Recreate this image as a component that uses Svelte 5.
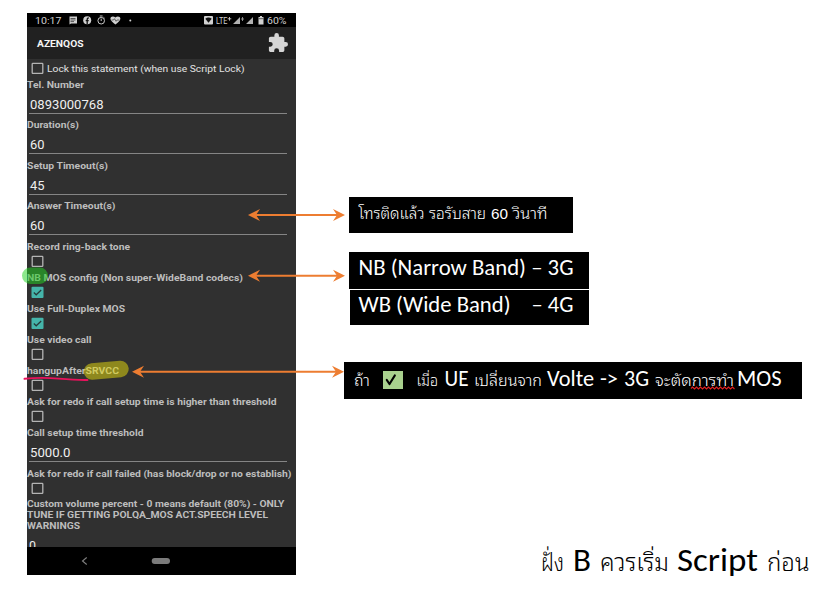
<script>
  const items = [
    { kind: 'field', label: ['Tel. Number', 57], value: ['0893000768', 73.5] },
    { kind: 'field', label: ['Duration(s)', 52], value: ['60', 14.5] },
    { kind: 'field', label: ['Setup Timeout(s)', 81], value: ['45', 14.5] },
    { kind: 'field', label: ['Answer Timeout(s)', 88.5], value: ['60', 14.5] },
    { kind: 'check', label: ['Record ring-back tone', 103] },
    { kind: 'check', label: ['NB MOS config (Non super-WideBand codecs)', 216], on: true },
    { kind: 'check', label: ['Use Full-Duplex MOS', 98], on: true },
    { kind: 'check', label: ['Use video call', 64.5] },
    { kind: 'check', label: ['hangupAfterSRVCC', 92] },
    { kind: 'check', label: ['Ask for redo if call setup time is higher than threshold', 249.5] },
    { kind: 'field', label: ['Call setup time threshold', 116.5], value: ['5000.0', 40.5] },
    { kind: 'check', label: ['Ask for redo if call failed (has block/drop or no establish)', 264.5] },
  ];
  const volume = [
    ['Custom volume percent - 0 means default (80%) - ONLY', 257.5],
    ['TUNE IF GETTING POLQA_MOS ACT.SPEECH LEVEL', 241],
    ['WARNINGS', 53],
  ];
  // Each run: text, x, width, class
  const answerNote = [
    ['โทรติดแล้ว', 9.5, 66, 'th'], ['รอรับสาย', 80, 57, 'th'], ['60', 142, 17, 'num'], ['วินาที', 163.5, 35, 'th'],
  ];
  const nbNote = [['NB (Narrow Band) – 3G', 9.5, 215, 'la']];
  const wbNote = [['WB (Wide Band)', 8.5, 152, 'la'], ['– 4G', 181.5, 42, 'la']];
  const srvccNote = [
    ['ถ้า', 10, 16, 'th'], ['เมื่อ', 72.5, 21.5, 'th'], ['UE', 100.5, 24, 'la'],
    ['เปลี่ยนจาก', 130, 68, 'th'], ['Volte', 203, 47, 'la'], ['->', 256, 18, 'la'], ['3G', 280, 25, 'la'],
    ['จะตัดการทำ', 311, 79, 'th'], ['MOS', 393, 44.5, 'la'],
  ];
  const footer = [
    ['ฝั่ง', 1, 23, 'th'], ['B', 33, 18, 'la'], ['ควรเริ่ม', 60, 69, 'th'], ['Script', 137, 81, 'la'], ['ก่อน', 227, 42.5, 'th'],
  ];
  const arrows = [[248, 345, 215], [248, 345, 275.7], [132, 344, 371.8]];
</script>

{#snippet line(text, width, height, base, cls)}
  <svg class="line {cls}" width={width + 1} {height}>
    <text x="0" y={base} textLength={width} lengthAdjust="spacingAndGlyphs">{text}</text>
  </svg>
{/snippet}

{#snippet runs(list, base)}
  {#each list as [text, x, w, cls]}
    <text class={cls} {x} y={base} textLength={w} lengthAdjust="spacingAndGlyphs">{text}</text>
  {/each}
{/snippet}

{#snippet box(on)}
  <svg class="box" width="13" height="13" viewBox="0 0 13 13">
    {#if on}
      <rect x=".5" y=".8" width="12" height="11.2" rx="1" fill="#45b5aa" />
      <path d="M2.800 6.500 5.200 8.800 10.200 4" fill="none" stroke="#263a39" stroke-width="1.200" />
    {:else}
      <rect x="1.200" y="1.400" width="10.600" height="10" rx=".7" fill="none" stroke="#b4b4b4" stroke-width="1.300" />
    {/if}
  </svg>
{/snippet}

<div class="slide">
  <div class="phone">
    <div class="status">
      <svg width="269" height="14" viewBox="27 13 269 14">
        <g fill="#d0d0d0">
          <text x="35" y="23.700" font-size="9.800" textLength="26.500" lengthAdjust="spacingAndGlyphs">10:17</text>
          <path d="M69.500 16.500h7.500v7h-6l-1.500 1z" />
          <path d="M70.500 18.500h5M70.500 20h5M70.500 21.600h3.500" stroke="#222" stroke-width=".7" />
          <circle cx="87.200" cy="20.200" r="4" />
          <path d="M87.200 24.300v-5q0-1.400 1.600-1.300M85.700 20.700h3" stroke="#111" stroke-width="1.300" fill="none" />
          <circle cx="101.200" cy="20.700" r="3.300" fill="none" stroke="#c8c8c8" stroke-width="1" />
          <path d="M99.800 16h2.800M101.200 18.600v2.400M103.700 17.400l.8.7" stroke="#c8c8c8" stroke-width="1" />
          <path d="M115.400 24.500c-2-1.500-5-3.500-5-5.700 0-2.800 3.500-3 5-1.200 1.500-1.800 5-1.600 5 1.200 0 2.200-3 4.200-5 5.700z" />
          <path d="M111.500 20h2l1-1.300 1.600 2.600 1-1.300h2.200" stroke="#333" stroke-width=".7" fill="none" />
          <circle cx="130.300" cy="20.500" r="1" />
          <rect x="204" y="16" width="9" height="8.500" rx="1" />
          <path d="M205.300 18.700q3.200-2.400 6.400 0l-3.200 4z" fill="#111" />
          <text x="216" y="23.500" font-size="8.500" textLength="11.500" lengthAdjust="spacingAndGlyphs">LTE</text>
          <path d="M229.500 17v3.600M227.700 18.800h3.600" stroke="#ccc" stroke-width=".9" />
          <path d="M233 24h7v-7zM246 24h7v-7z" opacity=".85" />
          <path d="M242.500 17v4M241 19h3" stroke="#aaa" stroke-width=".8" />
          <path d="M258.500 17h1.500v-1h2v1h1.500v7.500h-5z" />
          <path d="M258.500 18.700h5" stroke="#444" stroke-width=".8" />
          <text x="267" y="23.700" font-size="9.800" textLength="19.500" lengthAdjust="spacingAndGlyphs">60%</text>
        </g>
      </svg>
    </div>
    <div class="header">
      {@render line('AZENQOS', 46.5, 14, 10.5, 'title')}
      <svg width="20" height="20" viewBox="1.500 1 21 22"><path fill="#d5d5d5" d="M20.500 11H19V7c0-1.100-.9-2-2-2h-4V3.500a2.500 2.500 0 0 0-5 0V5H4c-1.100 0-2 .9-2 2v3.800h1.500a2.700 2.700 0 0 1 0 5.400H2V20c0 1.100.9 2 2 2h3.800v-1.500a2.700 2.700 0 0 1 5.400 0V22H17c1.100 0 2-.9 2-2v-4h1.500a2.500 2.500 0 0 0 0-5z" /></svg>
    </div>
    <div class="body">
      <div class="lock">
        {@render box(false)}
        {@render line('Lock this statement (when use Script Lock)', 197.5, 14, 10.2, 'locktext')}
      </div>
      {#each items as it}
        <div class={it.kind}>
          {@render line(it.label[0], it.label[1], 14, 9, 'label')}
          {#if it.kind === 'field'}
            <div class="input">{@render line(it.value[0], it.value[1], 20, 16, 'value')}</div>
          {:else}
            {@render box(it.on)}
          {/if}
        </div>
      {/each}
      <div class="volume">
        {#each volume as [text, w]}
          {@render line(text, w, 10.8, 9, 'label')}
        {/each}
        <div class="last">{@render line('0', 7, 20, 16, 'value')}</div>
      </div>
    </div>
    <div class="nav">
      <svg width="269" height="28" viewBox="0 0 269 28">
        <path d="M59.700 10.500 55.500 14l4.200 3.500" fill="none" stroke="#808080" stroke-width="1.100" />
        <rect x="124.700" y="11" width="18.300" height="6" rx="3" fill="#7b7b7b" />
      </svg>
    </div>
  </div>

  <svg class="note answer" width="224" height="36">{@render runs(answerNote, 22)}</svg>
  <svg class="note nb" width="240" height="37">{@render runs(nbNote, 23)}</svg>
  <svg class="note wb" width="239" height="35">{@render runs(wbNote, 22)}</svg>
  <svg class="note srvcc" width="458" height="37">
    {@render runs(srvccNote, 24)}
    <rect x="39" y="9" width="20" height="18" fill="#a9d18e" />
    <path d="M42.800 18 45.500 22 50.800 13.500" fill="none" stroke="#000" stroke-width="2.200" stroke-linecap="round" stroke-linejoin="round" />
    <path d="M347 26.500l1.500-1.500 2 2 2-2 2 2 2-2 2 2 2-2 2 2 2-2 2 2 2-2 2 2 2-2 2 2 2-2 2 2 2-2 2 2 2-2 2 2 2-2 2 2" fill="none" stroke="#e02020" stroke-width="1.100" />
  </svg>
  <svg class="footer" width="275" height="50">{@render runs(footer, 36)}</svg>

  <svg class="marks" width="835" height="596" viewBox="0 0 835 596">
    <rect x="22" y="267.500" width="26" height="16.500" rx="8.200" fill="#22d322" fill-opacity=".52" />
    <path d="M92 371.500 120.500 369" stroke="#e5d90c" stroke-opacity=".52" stroke-width="16.500" stroke-linecap="round" />
    <path d="M24.500 378.800q16-1.800 34-.2t29 1.400" fill="none" stroke="#e8125c" stroke-width="1.900" stroke-linecap="round" />
    {#each arrows as [a, b, y]}
      <path d="M{a + 8} {y}H{b - 8}" stroke="#ed7d31" stroke-width="2" />
      <path d="M{a} {y}l12-6-4 6 4 6zM{b} {y}l-12-6 4 6-4 6z" fill="#ed7d31" />
    {/each}
  </svg>
</div>

<style>
  :global(body) { margin: 0; background: #fff; }
  .slide { position: relative; width: 835px; height: 596px; overflow: hidden; box-sizing: border-box; padding: 13px 0 0 27px; background: #fff; }
  svg { display: block; flex: none; }
  .phone { width: 269px; height: 562px; display: flex; flex-direction: column; background: #303030; font-family: Roboto, "Liberation Sans", sans-serif; }
  .status { height: 14px; background: #000; }
  .header { height: 32px; box-sizing: border-box; padding: 0 8px 0 10px; display: flex; align-items: center; justify-content: space-between; background: #212121; }
  .body { height: 488px; overflow: hidden; }
  .nav { height: 28px; background: #000; }
  .line { overflow: visible; }
  .title { fill: #f5f5f5; font-size: 9.5px; font-weight: 700; }
  .lock { height: 19.6px; display: flex; gap: 3px; padding-left: 4px; box-sizing: border-box; padding-top: 3px; }
  .locktext { fill: #e2e2e2; font-size: 9.8px; }
  .label { fill: #bdbdbd; font-size: 9.3px; font-weight: 700; }
  .value { fill: #efefef; font-size: 12.5px; }
  .field { height: 40.63px; }
  .input { height: 20px; width: 258px; margin-left: 2px; border-bottom: 1px solid #858585; }
  .input .line { margin-left: 0.5px; }
  .check { height: 31px; }
  .check .box { margin-left: 4px; }
  .volume { margin-top: -0.6px; }
  .last { margin: 3.5px 0 0 2px; }
  .note { position: absolute; background: #000; fill: #fff; }
  .answer { left: 349px; top: 197px; }
  .nb { left: 349px; top: 252px; }
  .wb { left: 350px; top: 290px; }
  .srvcc { left: 344px; top: 362px; }
  .footer { position: absolute; left: 540px; top: 535px; fill: #000; overflow: visible; }
  .th { font-family: "Noto Sans Thai Looped", "Loma", "Noto Sans Thai", sans-serif; font-size: 15.5px; font-weight: 300; }
  .la { font-family: Carlito, "Open Sans", sans-serif; font-size: 22px; }
  .num { font-family: "Liberation Sans", sans-serif; font-size: 15px; }
  .footer .th { font-size: 24px; }
  .footer .la { font-size: 32.5px; font-weight: 500; }
  .marks { position: absolute; left: 0; top: 0; pointer-events: none; }
</style>
